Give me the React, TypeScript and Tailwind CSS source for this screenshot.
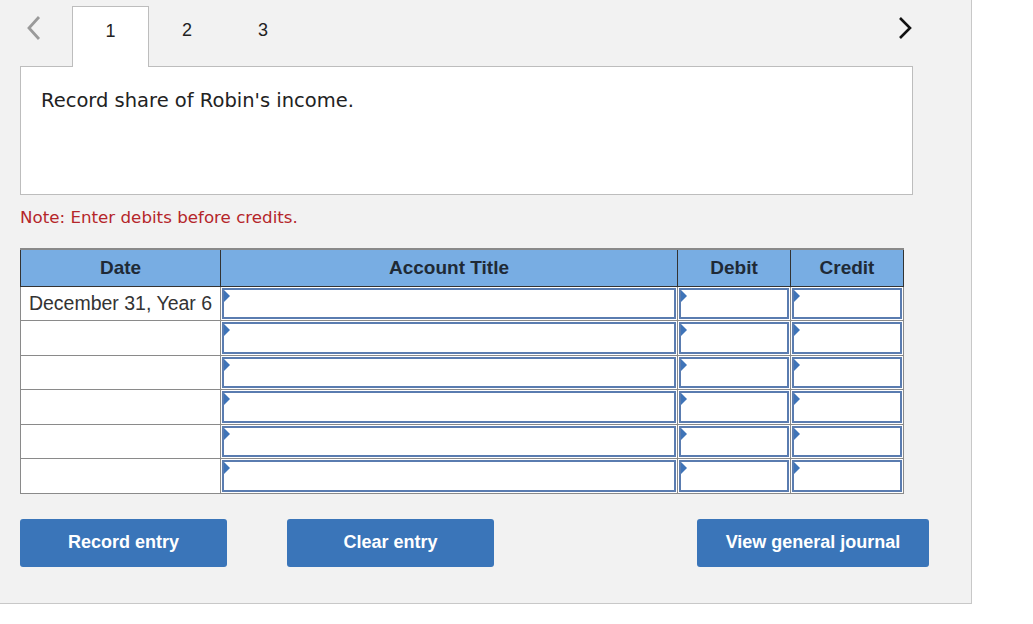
const rows = ['December 31, Year 6', '', '', '', '', ''];

function Flag() {
  return (
    <svg className="absolute left-0 top-0" width="6" height="12" viewBox="0 0 6 12">
      <polygon points="0,0 6,6 0,12" fill="#3f74b8" />
    </svg>
  );
}

function InputCell() {
  return (
    <td className="border border-[#8a8a8a] p-0 bg-white">
      <div className="relative h-[31.5px] m-px border-2 border-[#5a7cb0] bg-white">
        <Flag />
      </div>
    </td>
  );
}

export default function App() {
  return (
    <div className="w-[1033px] h-[624px] bg-white" style={{ fontFamily: '"Liberation Sans", Arial, sans-serif' }}>
      <div className="w-[972px] h-[604px] bg-[#f2f2f2] border-r border-b border-[#c8c8c8] pl-5 pt-[6px]">
        {/* tabs */}
        <div className="relative flex items-end h-[60px] w-[892px]">
          <div className="w-[52px] h-full flex items-center justify-start pl-[6px] pb-[16px]">
            <svg width="16" height="26" viewBox="0 0 16 26" fill="none">
              <polyline points="13,2 3,13 13,24" stroke="#9a9a9a" strokeWidth="2.8" />
            </svg>
          </div>
          <div className="relative z-10 w-[77px] h-[61px] -mb-px bg-white border border-b-0 border-[#bdbdbd] flex justify-center pt-[11px] text-[18px] text-[#222]">1</div>
          <div className="w-[76px] h-full flex justify-center pt-[11px] text-[18px] text-[#222]">2</div>
          <div className="w-[76px] h-full flex justify-center pt-[11px] text-[18px] text-[#222]">3</div>
          <div className="flex-1 h-full flex justify-end pb-[16px] items-center">
            <svg width="14" height="24" viewBox="0 0 14 24" fill="none">
              <polyline points="2,2 12,12 2,22" stroke="#111" strokeWidth="2.6" />
            </svg>
          </div>
        </div>
        {/* question box */}
        <div className="w-[893px] h-[129px] bg-white border border-[#bdbdbd] pl-5 pt-[20px] text-[19.5px] leading-[28px] text-[#222]" style={{ fontFamily: '"DejaVu Sans", Verdana, sans-serif' }}>
          Record share of Robin's income.
        </div>
        <div className="mt-[11px] text-[16.7px] leading-[22px] text-[#b5262a]" style={{ fontFamily: '"DejaVu Sans", Verdana, sans-serif' }}>
          Note: Enter debits before credits.
        </div>
        {/* table */}
        <table className="mt-[20px] w-[883px] border-collapse border-t-2 border-[#8a8a8a] table-fixed">
          <thead>
            <tr className="bg-[#78ade3] text-[#1f2a36] text-[19px] h-[37px]">
              <th className="w-[200px] border border-[#333] border-t-0 font-bold">Date</th>
              <th className="w-[457px] border border-[#333] border-t-0 font-bold">Account Title</th>
              <th className="w-[113px] border border-[#333] border-t-0 font-bold">Debit</th>
              <th className="w-[113px] border border-[#333] border-t-0 font-bold">Credit</th>
            </tr>
          </thead>
          <tbody>
            {rows.map((d, i) => (
              <tr key={i}>
                <td className="border border-[#8a8a8a] bg-white text-[19.5px] text-[#333] text-center p-0 whitespace-nowrap">{d}</td>
                <InputCell />
                <InputCell />
                <InputCell />
              </tr>
            ))}
          </tbody>
        </table>
        {/* buttons */}
        <div className="mt-[25px] flex w-[909px]">
          <button className="w-[207px] h-[48px] rounded-[3px] bg-[#3a75b9] text-white font-bold text-[18px]">Record entry</button>
          <button className="ml-[60px] w-[207px] h-[48px] rounded-[3px] bg-[#3a75b9] text-white font-bold text-[18px]">Clear entry</button>
          <button className="ml-auto w-[232px] h-[48px] rounded-[3px] bg-[#3a75b9] text-white font-bold text-[18px]">View general journal</button>
        </div>
      </div>
    </div>
  );
}
